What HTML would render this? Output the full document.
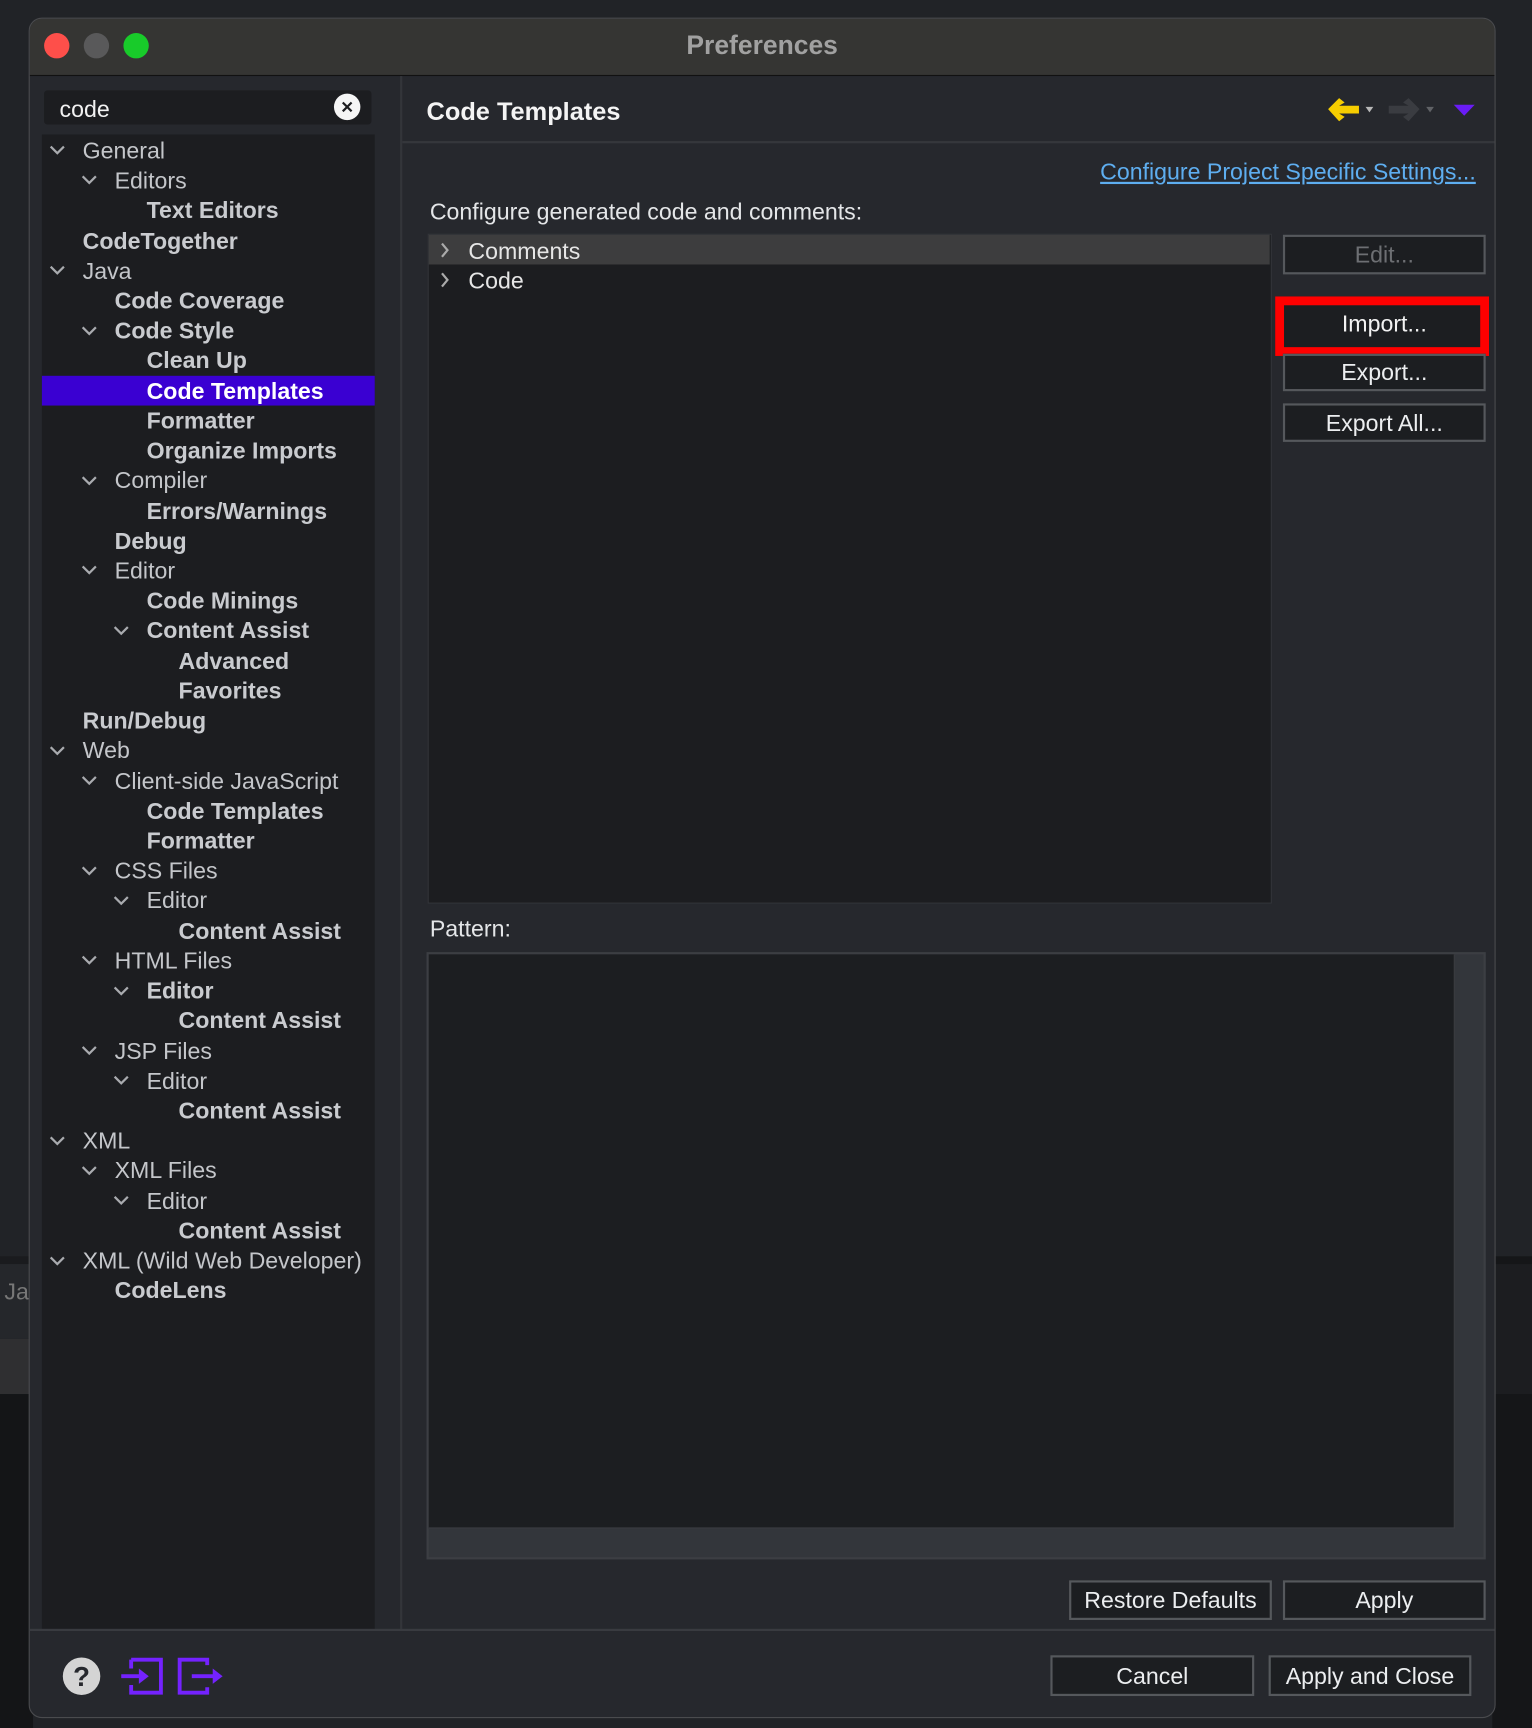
<!DOCTYPE html>
<html><head><meta charset="utf-8"><style>
*{margin:0;padding:0;box-sizing:border-box}
html,body{width:1532px;height:1728px;overflow:hidden;background:#212327}
#w{position:absolute;left:0;top:0;width:1390px;height:1568px;transform:scale(1.10216,1.10204);transform-origin:0 0;font-family:"Liberation Sans",sans-serif;}
.a{position:absolute}
.t{position:absolute;font-size:21px;line-height:27px;padding-top:2px;color:#c4c6ca;white-space:nowrap}
.b{font-weight:bold;color:#c9cbcf}
.btn{position:absolute;background:#1c1e21;border:2px solid #55585c;color:#eceef0;font-size:21px;text-align:center;white-space:nowrap}
</style></head><body><div id="w">
<div class="a" style="left:0;top:1140px;width:30px;height:8px;background:#1a1b1e"></div>
<div class="a" style="left:0;top:1147px;width:30px;height:68px;background:#25272b"></div>
<div class="a" style="left:0;top:1215px;width:30px;height:50px;background:#2f2f31"></div>
<div class="a" style="left:0;top:1265px;width:30px;height:303px;background:#141517"></div>
<div class="a" style="left:1354px;top:1140px;width:36px;height:428px;background:#151618"></div>
<div class="a" style="left:1354px;top:1147px;width:36px;height:118px;background:#1c1d20"></div>
<div class="t" style="left:4px;top:1157px;color:#777">Ja</div>
<div class="a" style="left:26px;top:16px;width:1331px;height:1543px;border-radius:12px;background:#26282d;border:1px solid #4a4b4e;overflow:hidden">
 <div class="a" style="left:0;top:0;width:100%;height:52px;background:#353533;border-bottom:1px solid #111"></div>
 <div class="a" style="left:13px;top:13px;width:23px;height:23px;border-radius:50%;background:#fe4f4a"></div>
 <div class="a" style="left:49px;top:13px;width:23px;height:23px;border-radius:50%;background:#59595a"></div>
 <div class="a" style="left:85px;top:13px;width:23px;height:23px;border-radius:50%;background:#18cb2a"></div>
 <div class="a" style="left:0;top:10px;width:100%;text-align:center;font-size:24px;font-weight:bold;color:#a1a1a1;line-height:30px">Preferences</div>
</div>
<div class="a" style="left:40px;top:82px;width:297px;height:31px;background:#1c1d20;border-radius:3px"></div>
<div class="t" style="left:54px;top:84px;color:#f2f2f2;font-size:21px">code</div>
<div class="a" style="left:303px;top:85px;width:24px;height:24px;border-radius:50%;background:#f5f5f5"></div>
<svg class="a" style="left:303px;top:85px" width="24" height="24"><path d="M8 8L16 16M16 8L8 16" stroke="#1c1d20" stroke-width="2"/></svg>
<div class="a" style="left:38px;top:122px;width:302px;height:1357px;background:#1c1d20"></div>
<div class="a" style="left:38px;top:341px;width:302px;height:27px;background:#3a00d2"></div>
<div class="a" style="left:363px;top:69px;width:2px;height:1410px;background:#33353a"></div>
<svg class="a" style="left:0;top:0" width="340" height="1200" fill="none" stroke="#a9abaf" stroke-width="2">
<g transform="translate(0,1)">
<path d="M46 132l6 6 6-6"/><path d="M75 159l6 6 6-6"/><path d="M46 241l6 6 6-6"/><path d="M75 296l6 6 6-6"/><path d="M75 432l6 6 6-6"/><path d="M75 513l6 6 6-6"/><path d="M104 568l6 6 6-6"/><path d="M46 677l6 6 6-6"/><path d="M75 704l6 6 6-6"/><path d="M75 786l6 6 6-6"/><path d="M104 813l6 6 6-6"/><path d="M75 867l6 6 6-6"/><path d="M104 895l6 6 6-6"/><path d="M75 949l6 6 6-6"/><path d="M104 976l6 6 6-6"/><path d="M46 1031l6 6 6-6"/><path d="M75 1058l6 6 6-6"/><path d="M104 1085l6 6 6-6"/><path d="M46 1140l6 6 6-6"/>
</g></svg>
<div class="t" style="left:75px;top:122px">General</div>
<div class="t" style="left:104px;top:149px">Editors</div>
<div class="t b" style="left:133px;top:176px">Text Editors</div>
<div class="t b" style="left:75px;top:204px">CodeTogether</div>
<div class="t" style="left:75px;top:231px">Java</div>
<div class="t b" style="left:104px;top:258px">Code Coverage</div>
<div class="t b" style="left:104px;top:285px">Code Style</div>
<div class="t b" style="left:133px;top:312px">Clean Up</div>
<div class="t b" style="left:133px;top:340px;color:#fff">Code Templates</div>
<div class="t b" style="left:133px;top:367px">Formatter</div>
<div class="t b" style="left:133px;top:394px">Organize Imports</div>
<div class="t" style="left:104px;top:421px">Compiler</div>
<div class="t b" style="left:133px;top:449px">Errors/Warnings</div>
<div class="t b" style="left:104px;top:476px">Debug</div>
<div class="t" style="left:104px;top:503px">Editor</div>
<div class="t b" style="left:133px;top:530px">Code Minings</div>
<div class="t b" style="left:133px;top:557px">Content Assist</div>
<div class="t b" style="left:162px;top:585px">Advanced</div>
<div class="t b" style="left:162px;top:612px">Favorites</div>
<div class="t b" style="left:75px;top:639px">Run/Debug</div>
<div class="t" style="left:75px;top:666px">Web</div>
<div class="t" style="left:104px;top:694px">Client-side JavaScript</div>
<div class="t b" style="left:133px;top:721px">Code Templates</div>
<div class="t b" style="left:133px;top:748px">Formatter</div>
<div class="t" style="left:104px;top:775px">CSS Files</div>
<div class="t" style="left:133px;top:802px">Editor</div>
<div class="t b" style="left:162px;top:830px">Content Assist</div>
<div class="t" style="left:104px;top:857px">HTML Files</div>
<div class="t b" style="left:133px;top:884px">Editor</div>
<div class="t b" style="left:162px;top:911px">Content Assist</div>
<div class="t" style="left:104px;top:939px">JSP Files</div>
<div class="t" style="left:133px;top:966px">Editor</div>
<div class="t b" style="left:162px;top:993px">Content Assist</div>
<div class="t" style="left:75px;top:1020px">XML</div>
<div class="t" style="left:104px;top:1047px">XML Files</div>
<div class="t" style="left:133px;top:1075px">Editor</div>
<div class="t b" style="left:162px;top:1102px">Content Assist</div>
<div class="t" style="left:75px;top:1129px">XML (Wild Web Developer)</div>
<div class="t b" style="left:104px;top:1156px">CodeLens</div>
<div class="t" style="left:387px;top:84px;font-size:23px;line-height:30px;font-weight:bold;color:#f4f4f4">Code Templates</div>
<div class="a" style="left:365px;top:128px;width:991px;height:2px;background:#35373c"></div>
<svg class="a" style="left:1200px;top:82px" width="145" height="36">
<path d="M5 17L15 7L20 11L15 14H33V21H15L20 24L15 28Z" fill="#f6cd00"/>
<path d="M39 15h7l-3.5 5z" fill="#b8b8b8"/>
<path d="M88 17L78 7L73 11L78 14H60V21H78L73 24L78 28Z" fill="#3a3c41"/>
<path d="M94 15h7l-3.5 5z" fill="#606266"/>
<path d="M119 13h19l-9.5 10z" fill="#6a1cf6"/>
</svg>
<div class="t" style="right:51px;top:141px;color:#5eaef0;text-decoration:underline">Configure Project Specific Settings...</div>
<div class="t" style="left:390px;top:177px;color:#e4e6e8">Configure generated code and comments:</div>
<div class="a" style="left:388px;top:212px;width:766px;height:608px;background:#1c1d20;border:1px solid #33353a"></div>
<div class="a" style="left:389px;top:213px;width:763px;height:27px;background:#3d3d3e"></div>
<svg class="a" style="left:395px;top:216px" width="20" height="52" fill="none" stroke="#aaa" stroke-width="2"><path d="M6 5l5 6-5 6M6 32l5 6-5 6"/></svg>
<div class="t" style="left:425px;top:213px;color:#e6e6e6">Comments</div>
<div class="t" style="left:425px;top:240px;color:#e6e6e6">Code</div>
<div class="btn" style="left:1164px;top:213px;width:184px;height:36px;line-height:34px;color:#6d6f73">Edit...</div>
<div class="a" style="left:1157px;top:269px;width:194px;height:54px;border:8px solid #fe0000;background:#1c1e21"></div>
<div class="t" style="left:1164px;top:279px;width:184px;text-align:center;color:#f2f2f2">Import...</div>
<div class="btn" style="left:1164px;top:321px;width:184px;height:34px;line-height:32px">Export...</div>
<div class="btn" style="left:1164px;top:366px;width:184px;height:35px;line-height:33px">Export All...</div>
<div class="t" style="left:390px;top:828px;color:#e4e6e8">Pattern:</div>
<div class="a" style="left:387px;top:864px;width:961px;height:551px;background:#33363b;border:2px solid #3c3e43"></div>
<div class="a" style="left:389px;top:866px;width:931px;height:521px;background:#1c1e21;border-right:1px solid #3c3e43;border-bottom:1px solid #3c3e43"></div>
<div class="btn" style="left:970px;top:1434px;width:184px;height:36px;line-height:34px">Restore Defaults</div>
<div class="btn" style="left:1164px;top:1434px;width:184px;height:36px;line-height:34px">Apply</div>
<div class="a" style="left:27px;top:1478px;width:1329px;height:2px;background:#393b40"></div>
<svg class="a" style="left:55px;top:1500px" width="160" height="42">
<circle cx="19" cy="21" r="17" fill="#d4d4d4"/>
<text x="19" y="30" font-family="Liberation Sans" font-weight="bold" font-size="25" text-anchor="middle" fill="#26282d">?</text>
<path d="M64 6h27v30h-27v-7M64 6v8" fill="none" stroke="#7422ff" stroke-width="3.5"/>
<path d="M55 21h17" stroke="#7422ff" stroke-width="3.5"/><path d="M71 14l9 7-9 7z" fill="#7422ff"/>
<path d="M133 11V6h-25v30h25v-5" fill="none" stroke="#7422ff" stroke-width="3.5"/>
<path d="M119 21h20" stroke="#7422ff" stroke-width="3.5"/><path d="M138 14l9 7-9 7z" fill="#7422ff"/>
</svg>
<div class="btn" style="left:953px;top:1502px;width:185px;height:37px;line-height:35px">Cancel</div>
<div class="btn" style="left:1151px;top:1502px;width:184px;height:37px;line-height:35px">Apply and Close</div>
</div></body></html>
